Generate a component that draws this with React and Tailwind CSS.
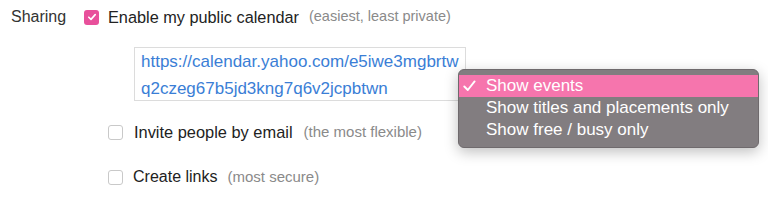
import React from 'react';

const font = { fontFamily: '"Liberation Sans", Arial, sans-serif' };

function Box({ checked }) {
    if (checked) {
        return (
            <span className="w-[15px] h-[15px] rounded-[3px] bg-[#e8509b] flex items-center justify-center shrink-0">
                <svg width="10" height="10" viewBox="0 0 10 10" fill="none">
                    <path d="M1.8 5.2 L4 7.4 L8.2 2.6" stroke="white" strokeWidth="1.6" strokeLinecap="round" strokeLinejoin="round" />
                </svg>
            </span>
        );
    }
    return <span className="w-[15px] h-[15px] rounded-[3px] border border-[#c9c9c9] bg-white shrink-0"></span>;
}

export default function App() {
    return (
        <div className="relative w-[768px] h-[212px] bg-white text-[#222] overflow-hidden" style={font}>
            {/* Sharing row */}
            <div className="flex items-center h-[20px] pl-[11px] mt-[7px]">
                <span className="w-[73px] text-[16px] text-[#333]">Sharing</span>
                <Box checked />
                <span className="ml-[9px] text-[16.3px] text-[#222]">Enable my public calendar</span>
                <span className="ml-[10px] text-[14.5px] text-[#8a8a8a]">(easiest, least private)</span>
            </div>

            {/* public URL */}
            <div className="ml-[134px] mt-[20px] w-[332px] h-[54px] border border-[#dcdcdc] pl-[6px] text-[17px] leading-[27px] text-[#3a7ed6]">
                <div>https://calendar.yahoo.com/e5iwe3mgbrtw</div>
                <div>q2czeg67b5jd3kng7q6v2jcpbtwn</div>
            </div>

            <div className="flex items-center h-[20px] ml-[108px] mt-[21px]">
                <Box />
                <span className="ml-[11px] text-[16.4px] text-[#222]">Invite people by email</span>
                <span className="ml-[11px] text-[15px] text-[#8a8a8a]">(the most flexible)</span>
            </div>

            <div className="flex items-center h-[20px] ml-[108px] mt-[25px]">
                <Box />
                <span className="ml-[10px] text-[16px] text-[#222]">Create links</span>
                <span className="ml-[10px] text-[15px] text-[#8a8a8a]">(most secure)</span>
            </div>

            {/* dropdown menu */}
            <div className="absolute left-[458px] top-[69px] w-[301px] h-[79px] rounded-[6px] bg-[#827d80] border border-[#6f6a6d] shadow-[0_4px_14px_rgba(0,0,0,0.25)] pt-[5px] text-white text-[17px]">
                <div className="flex items-center h-[22px] bg-[#f675ad]">
                    <span className="w-[27px] pl-[4px] flex items-center">
                        <svg width="13" height="12" viewBox="0 0 13 12" fill="none">
                            <path d="M1.3 6.5 L4.8 10 L11.6 1.4" stroke="white" strokeWidth="1.9" strokeLinecap="round" strokeLinejoin="round" />
                        </svg>
                    </span>
                    <span>Show events</span>
                </div>
                <div className="flex items-center h-[22px] pl-[27px]">Show titles and placements only</div>
                <div className="flex items-center h-[22px] pl-[27px]">Show free / busy only</div>
            </div>
        </div>
    );
}
